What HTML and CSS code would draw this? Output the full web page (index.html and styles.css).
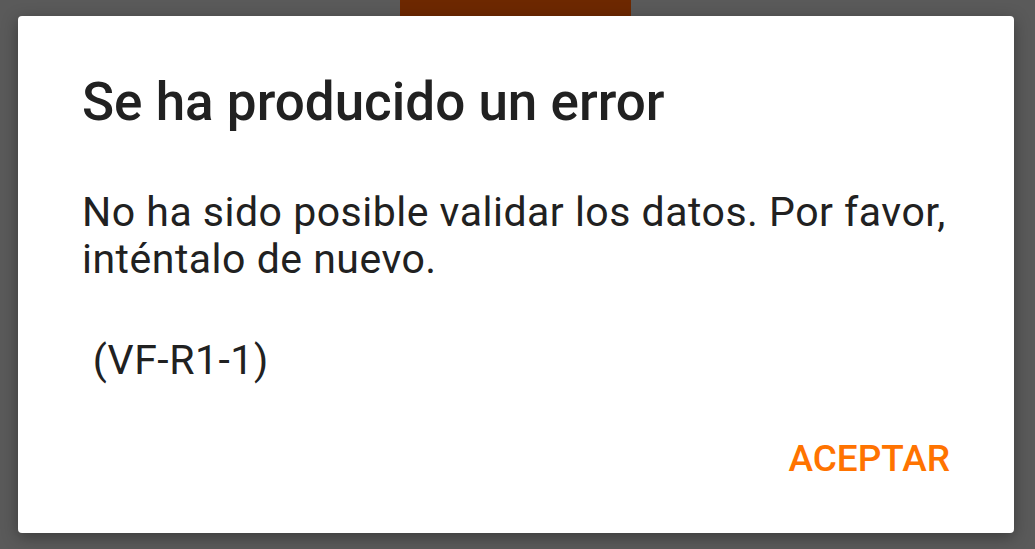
FILE: index.html
```html
<!DOCTYPE html>
<html lang="es">
<head>
<meta charset="utf-8">
<link rel="stylesheet" href="styles.css">
</head>
<body>
<div class="screen">
  <div class="topbar"></div>
  <div class="dialog">
    <h1 class="title">Se ha producido un error</h1>
    <p class="message">No ha sido posible validar los datos. Por favor, inténtalo de nuevo.</p>
    <p class="message code">&nbsp;(VF-R1-1)</p>
    <div class="actions">
      <button class="btn">ACEPTAR</button>
    </div>
  </div>
</div>
</body>
</html>
```
FILE: styles.css
```css
html, body {
  margin: 0;
  padding: 0;
}
body {
  background: #5a5a5a;
  font-family: Roboto, "Noto Sans", sans-serif;
  width: 1035px;
  height: 549px;
  overflow: hidden;
}
.screen {
  position: relative;
  width: 1035px;
  height: 549px;
  padding-top: 16px;
  box-sizing: border-box;
}
.topbar {
  position: absolute;
  left: 400px;
  top: 0;
  width: 231px;
  height: 16px;
  background: #6d2800;
}
.dialog {
  position: relative;
  margin-left: 18px;
  width: 996px;
  height: 517px;
  background: #fff;
  border-radius: 4px;
  box-shadow: 0 4px 16px rgba(0,0,0,0.35);
  box-sizing: border-box;
  padding: 56px 64px 0 64px;
  display: flex;
  flex-direction: column;
}
.title {
  margin: 0;
  font-size: 53px;
  font-weight: 500;
  color: #212121;
  line-height: 60px;
}
.message {
  margin: 57px 0 0 0;
  font-size: 41px;
  line-height: 47px;
  letter-spacing: 0.5px;
  color: #212121;
}
.message.code {
  margin-top: 54px;
}
.actions {
  margin-top: auto;
  display: flex;
  justify-content: flex-end;
  padding-bottom: 52px;
}
.btn {
  border: none;
  background: none;
  font-family: Roboto, "Noto Sans", sans-serif;
  font-size: 37px;
  line-height: 44px;
  font-weight: 500;
  color: #ff7300;
  padding: 0;
  margin: 0;
}
```
